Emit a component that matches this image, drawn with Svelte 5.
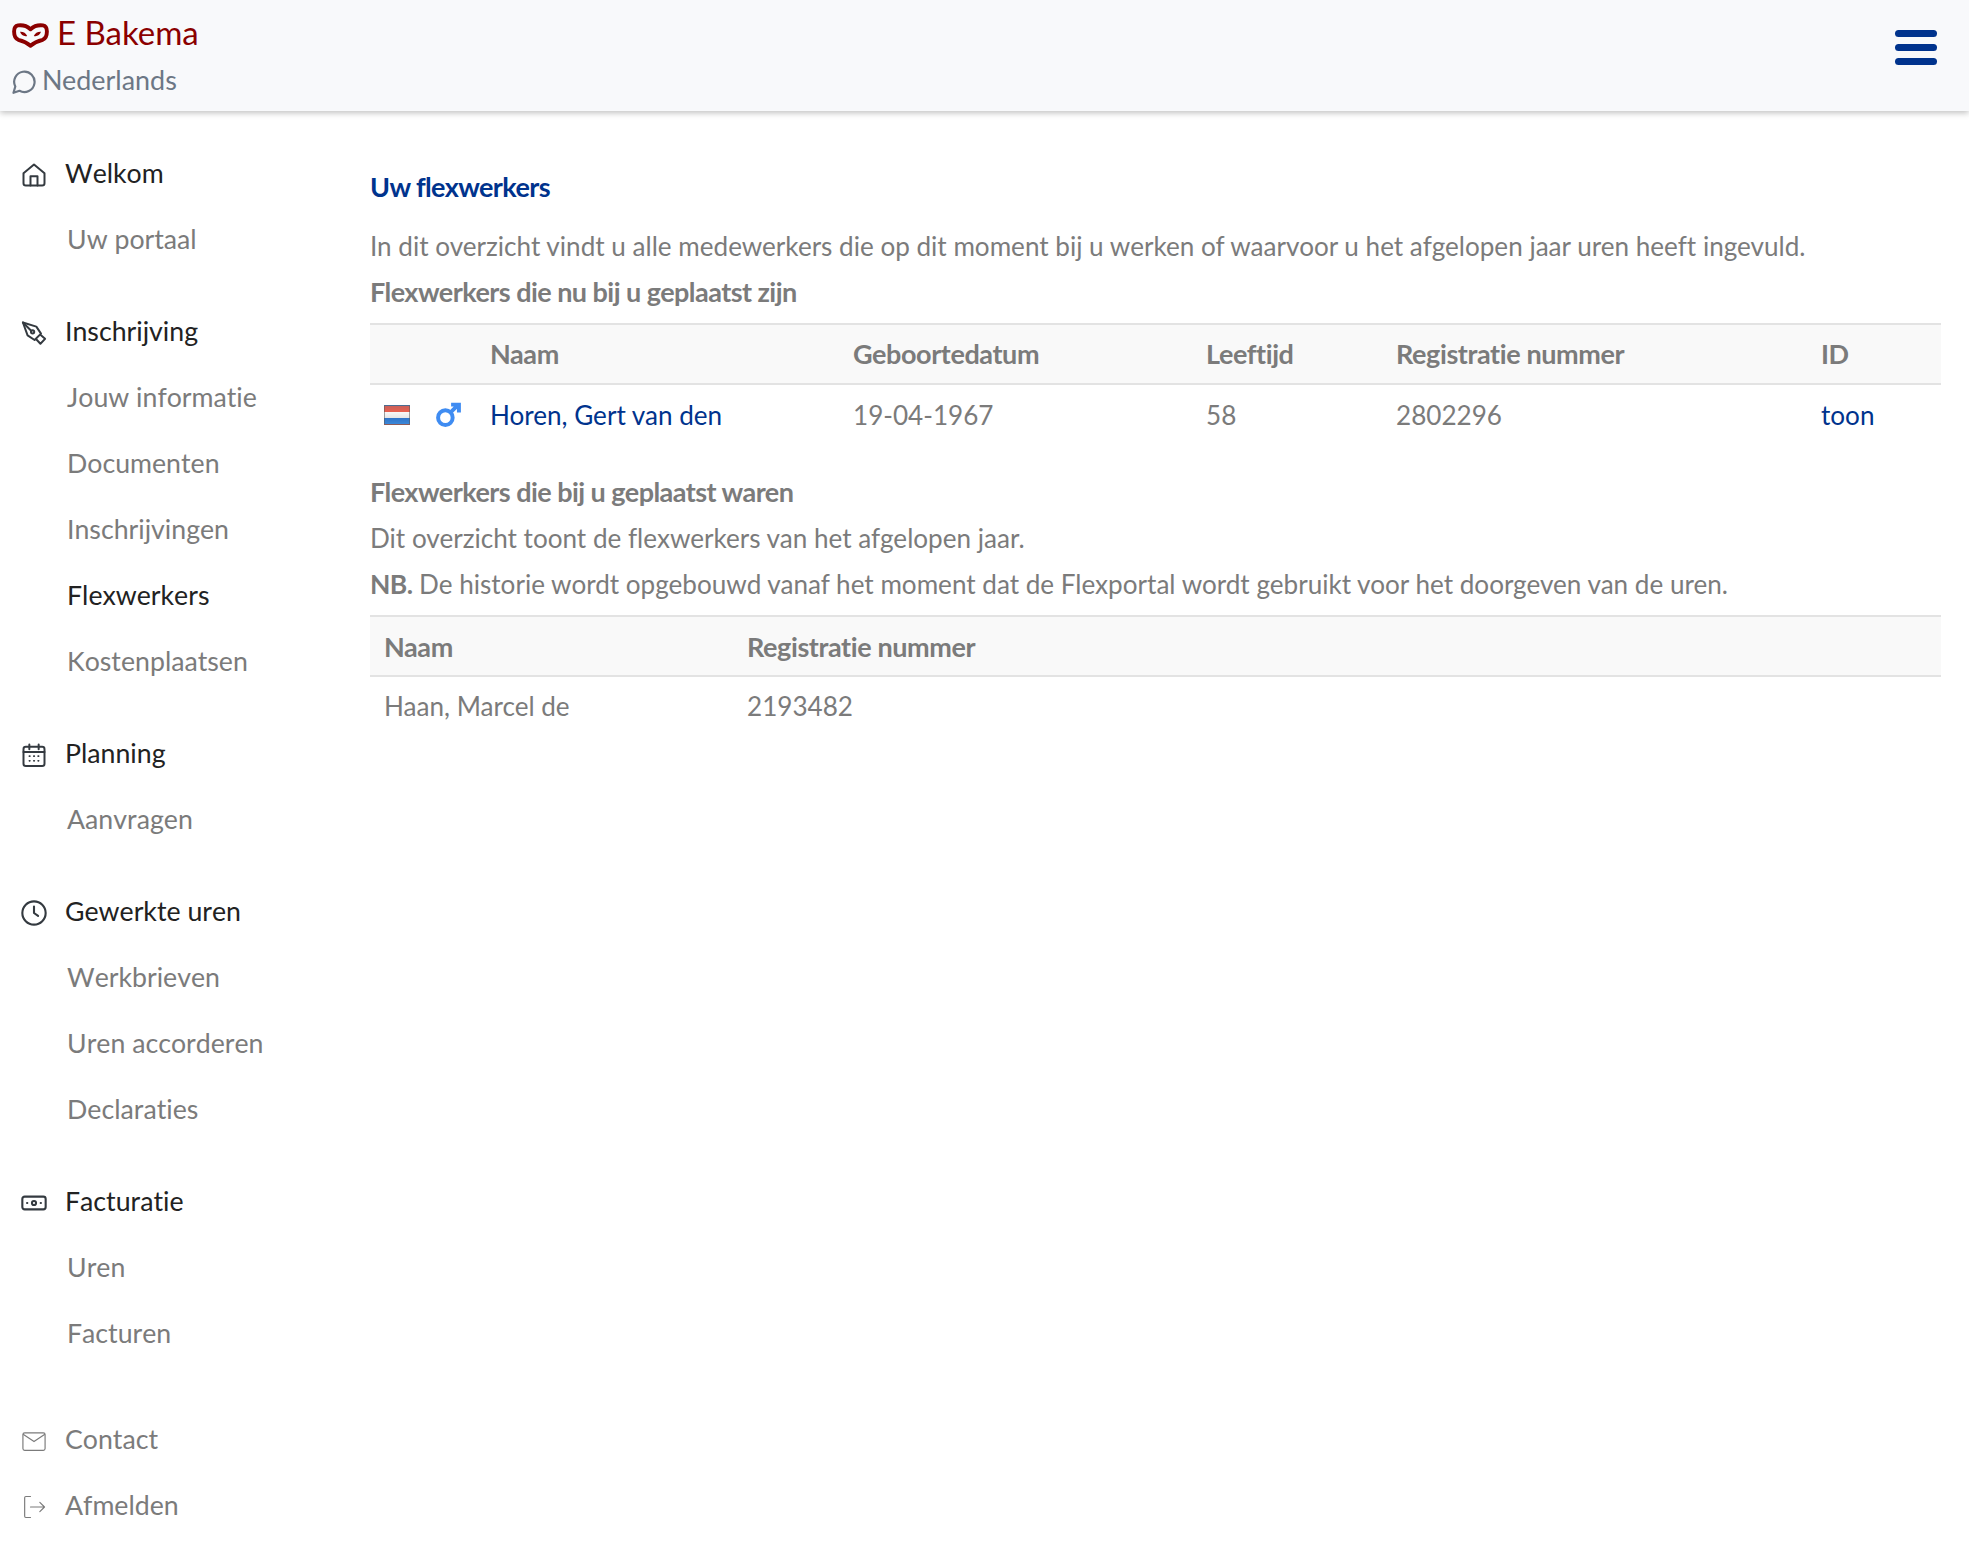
<script lang="ts">
	const groups = [
		{ title: 'Welkom', icon: 'home', items: ['Uw portaal'] },
		{ title: 'Inschrijving', icon: 'pen', items: ['Jouw informatie', 'Documenten', 'Inschrijvingen', 'Flexwerkers', 'Kostenplaatsen'] },
		{ title: 'Planning', icon: 'calendar', items: ['Aanvragen'] },
		{ title: 'Gewerkte uren', icon: 'clock', items: ['Werkbrieven', 'Uren accorderen', 'Declaraties'] },
		{ title: 'Facturatie', icon: 'cash', items: ['Uren', 'Facturen'] }
	];
</script>

{#snippet icon(name: string)}
	<svg class="nav-icon" viewBox="0 0 24 24" fill="none" stroke="currentColor" stroke-width="1.7" stroke-linecap="round" stroke-linejoin="round">
		{#if name === 'home'}
			<path d="M3 10.500 12 3l9 7.500V19a2 2 0 0 1-2 2H5a2 2 0 0 1-2-2z" />
			<path d="M9 21v-8h6v8" />
		{:else if name === 'pen'}
			<path d="M2.500 3 14 6.500l4 6-5.500 5.500-6-4z" />
			<path d="M2.500 3l7.300 7.300" />
			<circle cx="10.800" cy="11" r="1.400" />
			<path d="M18 14l3.500 3-4 4.200-3.200-3.400" />
		{:else if name === 'calendar'}
			<rect x="3" y="5" width="18" height="16.500" rx="2" />
			<path d="M3 9.500h18M8 3v4M16 3v4" />
			<path d="M8 13h.5M11.800 13h.5M15.500 13h.5M8 17h.5M11.800 17h.5M15.500 17h.5" stroke-width="1.400" />
		{:else if name === 'clock'}
			<circle cx="12" cy="12" r="10" stroke-width="1.800" />
			<path d="M12 6.500V12l3.500 2.500" stroke-width="1.800" />
		{:else if name === 'cash'}
			<rect x="2" y="6.500" width="20" height="11" rx="2" stroke-width="1.800" />
			<circle cx="12" cy="12" r="1.800" stroke-width="1.700" />
			<path d="M6 12h.3M17.700 12h.3" stroke-width="1.700" />
		{:else if name === 'mail'}
			<rect x="2.500" y="5" width="19" height="15" rx="1.500" stroke-width="1" />
			<path d="M3 6.500 12 12.500l9-6" stroke-width="1" />
		{:else if name === 'logout'}
			<path d="M9 3H5a1 1 0 0 0-1 1v16a1 1 0 0 0 1 1h4" stroke-width="1" />
			<path d="M9 12h12M17 8l4 4-4 4" stroke-width="1" />
		{/if}
	</svg>
{/snippet}

<div class="page">
	<header class="topbar">
		<div class="brand-block">
			<div class="brand">
				<svg class="logo" viewBox="0 0 37 25" fill="none">
					<path d="M6 2.400C10.500 1.800 15 3 18.500 6.200 22 3 26.500 1.800 31 2.400c2.700.4 3.900 2.600 3.900 6.100 0 4-1.300 7-4.200 8.300-4.500 1.100-8.500 2.700-12.200 5.900-3.700-3.200-7.700-4.800-12.200-5.900C3.400 15.500 2.100 12.500 2.100 8.500c0-3.500 1.200-5.700 3.900-6.100z" stroke="#8b0000" stroke-width="3.900" stroke-linejoin="round" />
					<path d="M8 8.800c3.200-.2 6 1.200 7.200 4.200-3.400.8-6.200-1.100-7.200-4.200zM29 8.800c-3.200-.2-6 1.200-7.200 4.200 3.400.8 6.200-1.100 7.200-4.200z" fill="#8b0000" />
				</svg>
				<span>E Bakema</span>
			</div>
			<div class="lang">
				<svg class="bubble" viewBox="0 0 24 24" fill="none" stroke="currentColor" stroke-width="2.200" stroke-linejoin="round">
					<path d="M1.500 22.800l1.800-6.300A10.200 10.200 0 1 1 7.500 20.800z" />
				</svg>
				<span>Nederlands</span>
			</div>
		</div>
		<button class="menu" aria-label="Menu"><span></span><span></span><span></span></button>
	</header>

	<div class="body">
		<nav class="side">
			{#each groups as g}
				<section class="group">
					<div class="group-title">{@render icon(g.icon)}<span>{g.title}</span></div>
					{#each g.items as item}
						<div class="sub" class:active={item === 'Flexwerkers'}>{item}</div>
					{/each}
				</section>
			{/each}
			<section class="group extra">
				<div class="group-title muted">{@render icon('mail')}<span>Contact</span></div>
				<div class="group-title muted">{@render icon('logout')}<span>Afmelden</span></div>
			</section>
		</nav>

		<main class="content">
			<h1>Uw flexwerkers</h1>
			<p>In dit overzicht vindt u alle medewerkers die op dit moment bij u werken of waarvoor u het afgelopen jaar uren heeft ingevuld.</p>
			<h2>Flexwerkers die nu bij u geplaatst zijn</h2>
			<table class="current">
				<thead>
					<tr>
						<th class="c-icons"></th>
						<th class="c-name">Naam</th>
						<th class="c-birth">Geboortedatum</th>
						<th class="c-age">Leeftijd</th>
						<th class="c-reg">Registratie nummer</th>
						<th>ID</th>
					</tr>
				</thead>
				<tbody>
					<tr>
						<td class="c-icons">
							<div class="marks">
								<span class="flag"></span>
								<svg class="male" viewBox="0 0 24 24" fill="none" stroke="#3f8cf2" stroke-width="3.800">
									<circle cx="9" cy="15" r="7" />
									<path d="M14 10 21.500 2.500M14.500 2.500h7.500V10" />
								</svg>
							</div>
						</td>
						<td><a href="#top">Horen, Gert van den</a></td>
						<td>19-04-1967</td>
						<td>58</td>
						<td>2802296</td>
						<td><a href="#top">toon</a></td>
					</tr>
				</tbody>
			</table>
			<h2 class="second">Flexwerkers die bij u geplaatst waren</h2>
			<p>Dit overzicht toont de flexwerkers van het afgelopen jaar.</p>
			<p><b>NB.</b> De historie wordt opgebouwd vanaf het moment dat de Flexportal wordt gebruikt voor het doorgeven van de uren.</p>
			<table class="past">
				<thead>
					<tr><th class="p-name">Naam</th><th>Registratie nummer</th></tr>
				</thead>
				<tbody>
					<tr><td>Haan, Marcel de</td><td>2193482</td></tr>
				</tbody>
			</table>
		</main>
	</div>
</div>

<style>
	:global(body) {
		margin: 0;
		background: #fff;
		font-family: Lato, "Open Sans", sans-serif;
		font-size: 26px;
		font-variant-ligatures: none;
		color: #7b7b7b;
	}
	.page {
		min-height: 1564px;
	}
	.topbar {
		height: 111px;
		box-sizing: border-box;
		background: #f8f9fb;
		box-shadow: 0 2px 6px rgba(0, 0, 0, 0.25);
		display: flex;
		justify-content: space-between;
		padding: 11px 32px 0 12px;
	}
	.brand {
		display: flex;
		align-items: center;
		gap: 8px;
		font-size: 33px;
		line-height: 42px;
		color: #8b0000;
	}
	.logo {
		width: 37px;
		height: 25px;
		margin-top: 6px;
	}
	.lang {
		display: flex;
		align-items: center;
		gap: 6px;
		margin-top: 7px;
		font-size: 26.900px;
		line-height: 40px;
		color: #6c7785;
	}
	.bubble {
		width: 24px;
		height: 24px;
		margin-top: 4px;
	}
	.menu {
		border: 0;
		background: none;
		padding: 0;
		margin-top: 19px;
		width: 42px;
		height: 35px;
		display: flex;
		flex-direction: column;
		justify-content: space-between;
	}
	.menu span {
		display: block;
		height: 7px;
		width: 42px;
		border-radius: 4px;
		background: #00338d;
	}
	.body {
		display: flex;
	}
	.side {
		width: 370px;
		flex: none;
		padding-top: 29px;
		box-sizing: border-box;
		font-size: 26.700px;
		font-kerning: none;
	}
	.group {
		margin-bottom: 26px;
	}
	.group.extra {
		margin-top: 40px;
		margin-bottom: 0;
	}
	.group-title {
		display: flex;
		align-items: center;
		height: 66px;
		padding-left: 20px;
		gap: 17px;
		color: #222;
	}
	.group-title.muted {
		color: #7b7b7b;
	}
	.nav-icon {
		width: 28px;
		height: 28px;
		flex: none;
		color: #343a40;
		margin-top: 3px;
	}
	.muted .nav-icon {
		color: #7b7b7b;
	}
	.sub {
		height: 66px;
		line-height: 66px;
		padding-left: 67px;
	}
	.sub.active {
		color: #222;
	}
	.content {
		flex: 1;
		min-width: 0;
		padding: 56px 28px 0 0;
		font-size: 26.100px;
	}
	h1 {
		margin: 0 0 16px;
		font-size: 27px;
		line-height: 40px;
		font-weight: 700;
		letter-spacing: -0.6px;
		color: #00338d;
	}
	h2 {
		margin: 0;
		font-size: 27px;
		line-height: 46px;
		font-weight: 700;
		letter-spacing: -0.54px;
	}
	h2.second {
		margin-top: 23px;
	}
	p {
		margin: 0;
		line-height: 46px;
	}
	b {
		font-size: 26.500px;
		letter-spacing: -0.6px;
	}
	table {
		width: 100%;
		border-collapse: collapse;
		table-layout: fixed;
	}
	.current {
		margin-top: 8px;
	}
	.past {
		margin-top: 8px;
	}
	th {
		text-align: left;
		background: #f9f9f9;
		border-top: 2px solid #e3e3e3;
		border-bottom: 2px solid #e3e3e3;
		height: 60px;
		padding: 0 14px;
		font-size: 27px;
		font-weight: 700;
		letter-spacing: -0.4px;
		box-sizing: border-box;
	}
	.current th {
		padding-bottom: 2px;
	}
	.past th {
		height: 60px;
	}
	td {
		height: 58px;
		padding: 0 14px;
		box-sizing: border-box;
	}
	.current td {
		height: 62px;
		padding-bottom: 2px;
	}
	a {
		color: #00338d;
		text-decoration: none;
	}
	.c-icons {
		width: 106px;
	}
	.c-name {
		width: 363px;
	}
	.c-birth {
		width: 353px;
	}
	.c-age {
		width: 190px;
	}
	.c-reg {
		width: 425px;
	}
	.p-name {
		width: 363px;
	}
	.marks {
		display: flex;
		align-items: center;
		gap: 26px;
	}
	.flag {
		width: 26px;
		height: 20px;
		box-sizing: border-box;
		border: 1px solid rgba(90, 90, 90, 0.55);
		background: linear-gradient(#c9605a 0, #e8604f 32%, #f7f7f7 34%, #e6e6e6 66%, #2f74c9 68%, #3b88d8 100%);
	}
	.male {
		width: 25px;
		height: 25px;
		flex: none;
	}
</style>
